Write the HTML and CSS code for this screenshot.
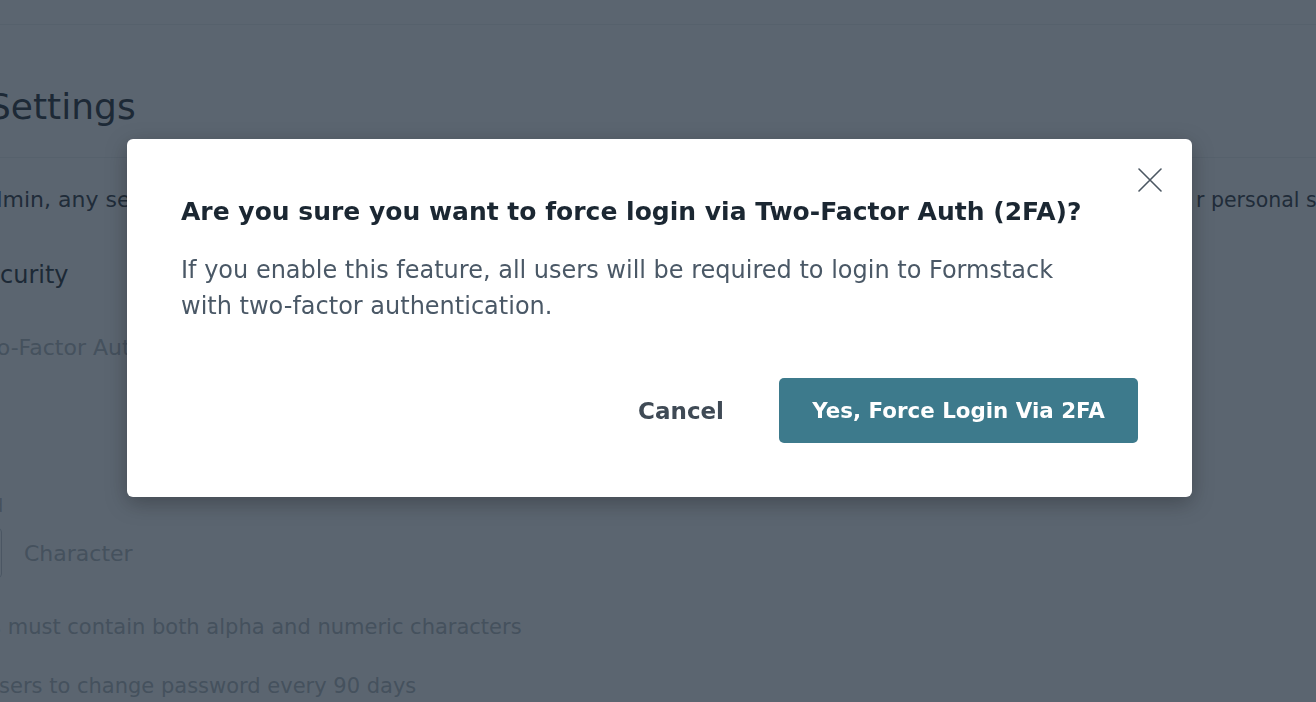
FILE: index.html
```html
<!DOCTYPE html>
<html lang="en">
<head>
<meta charset="utf-8">
<title>Account Settings</title>
<link rel="stylesheet" href="styles.css">
</head>
<body>
<div class="page">
  <div class="topbar"></div>
  <main class="content">
    <h1 class="page-title">Settings</h1>
    <div class="divider"></div>
    <p class="intro"><span class="intro-a">As an Admin, any settings you select here will apply to every user in your account and will override thei</span><span class="intro-b">r personal settings.</span></p>
    <h2 class="section-title">Security</h2>
    <div class="field-label">Two-Factor Authentication</div>
    <div class="field-label small">Minimum Password</div>
    <div class="input-row">
      <div class="num-input"></div>
      <span class="unit">Character</span>
    </div>
    <div class="option">Passwords must contain both alpha and numeric characters</div>
    <div class="option second">Require users to change password every 90 days</div>
  </main>
</div>

<div class="backdrop">
  <div class="modal" role="dialog" aria-labelledby="modal-title">
    <button class="close" aria-label="Close">
      <svg viewBox="0 0 24 24" width="24" height="24"><path d="M1 1 L23 23 M23 1 L1 23" stroke="#4b5762" stroke-width="1.6" fill="none" stroke-linecap="round"/></svg>
    </button>
    <h3 id="modal-title" class="modal-title">Are you sure you want to force login via Two-Factor Auth (2FA)?</h3>
    <p class="modal-body">If you enable this feature, all users will be required to login to Formstack<br>with two-factor authentication.</p>
    <div class="actions">
      <button class="btn-cancel">Cancel</button>
      <button class="btn-primary">Yes, Force Login Via 2FA</button>
    </div>
  </div>
</div>
</body>
</html>
```

FILE: styles.css
```css
* { box-sizing: border-box; }

html, body {
  margin: 0;
  padding: 0;
  height: 100%;
  overflow: hidden;
}

body {
  font-family: "DejaVu Sans", "Noto Sans", sans-serif;
  background: #ffffff;
  color: #303d48;
}

.page {
  width: 1316px;
  height: 702px;
  overflow: hidden;
}

.topbar {
  height: 25px;
  border-bottom: 1px solid #eef0f2;
}

.content {
  white-space: nowrap;
}

.page-title {
  margin: 58px 0 0 -12px;
  font-size: 36px;
  line-height: 48px;
  font-weight: 400;
  color: #30363c;
}

.divider {
  margin-top: 26px;
  height: 1px;
  background: #eef0f2;
}

.intro {
  margin: 27px 0 0 -94px;
  font-size: 22px;
  line-height: 30px;
  display: flex;
  color: #3a4048;
}

.intro-a {
  display: block;
  flex: 0 0 1290px;
  overflow: hidden;
}

.intro-b {
  flex: 0 0 auto;
  font-size: 20.5px;
}

.section-title {
  margin: 40px 0 0 -30px;
  font-size: 24px;
  line-height: 40px;
  font-weight: 400;
  color: #30363c;
}

.field-label {
  margin: 38px 0 0 -31px;
  font-size: 22px;
  line-height: 30px;
  color: #b4bbc0;
}

.field-label.small {
  margin: 131px 0 0 -170px;
  font-size: 18px;
  line-height: 24px;
}

.input-row {
  margin-top: 10px;
  display: flex;
  align-items: center;
  gap: 22px;
  height: 50px;
}

.num-input {
  width: 70px;
  height: 50px;
  margin-left: -68px;
  border: 1px solid #c8ced3;
  border-radius: 4px;
}

.unit {
  font-size: 22px;
  color: #b4bbc0;
}

.option {
  margin: 34px 0 0 -108px;
  font-size: 21px;
  line-height: 30px;
  color: #b4bbc0;
}

.option.second {
  margin: 29px 0 0 -101px;
}

.backdrop {
  position: fixed;
  inset: 0;
  background: rgba(21, 36, 51, 0.7);
  display: flex;
  justify-content: center;
  align-items: flex-start;
  padding: 139px 0 0 3px;
}

.modal {
  position: relative;
  width: 1065px;
  height: 358px;
  background: #ffffff;
  border-radius: 6px;
  padding: 57px 54px 54px;
  box-shadow: 0 6px 22px rgba(0, 0, 0, 0.28);
  display: flex;
  flex-direction: column;
}

.close {
  position: absolute;
  top: 29px;
  right: 30px;
  width: 24px;
  height: 24px;
  padding: 0;
  border: 0;
  background: none;
  cursor: pointer;
}

.close svg { display: block; }

.modal-title {
  margin: 0;
  font-size: 25px;
  line-height: 32px;
  font-weight: 700;
  color: #1b2732;
}

.modal-body {
  margin: 24px 0 0;
  font-size: 24px;
  line-height: 36px;
  color: #4a5866;
}

.actions {
  margin-top: auto;
  display: flex;
  justify-content: flex-end;
  align-items: center;
  gap: 31px;
}

.btn-cancel {
  font-family: inherit;
  font-size: 23px;
  font-weight: 700;
  color: #3f4a55;
  background: none;
  border: 0;
  padding: 0 24px;
  height: 65px;
  cursor: pointer;
}

.btn-primary {
  font-family: inherit;
  font-size: 21.4px;
  font-weight: 700;
  color: #ffffff;
  background: #3d7a8c;
  border: 0;
  border-radius: 5px;
  width: 359px;
  height: 65px;
  cursor: pointer;
}
```
